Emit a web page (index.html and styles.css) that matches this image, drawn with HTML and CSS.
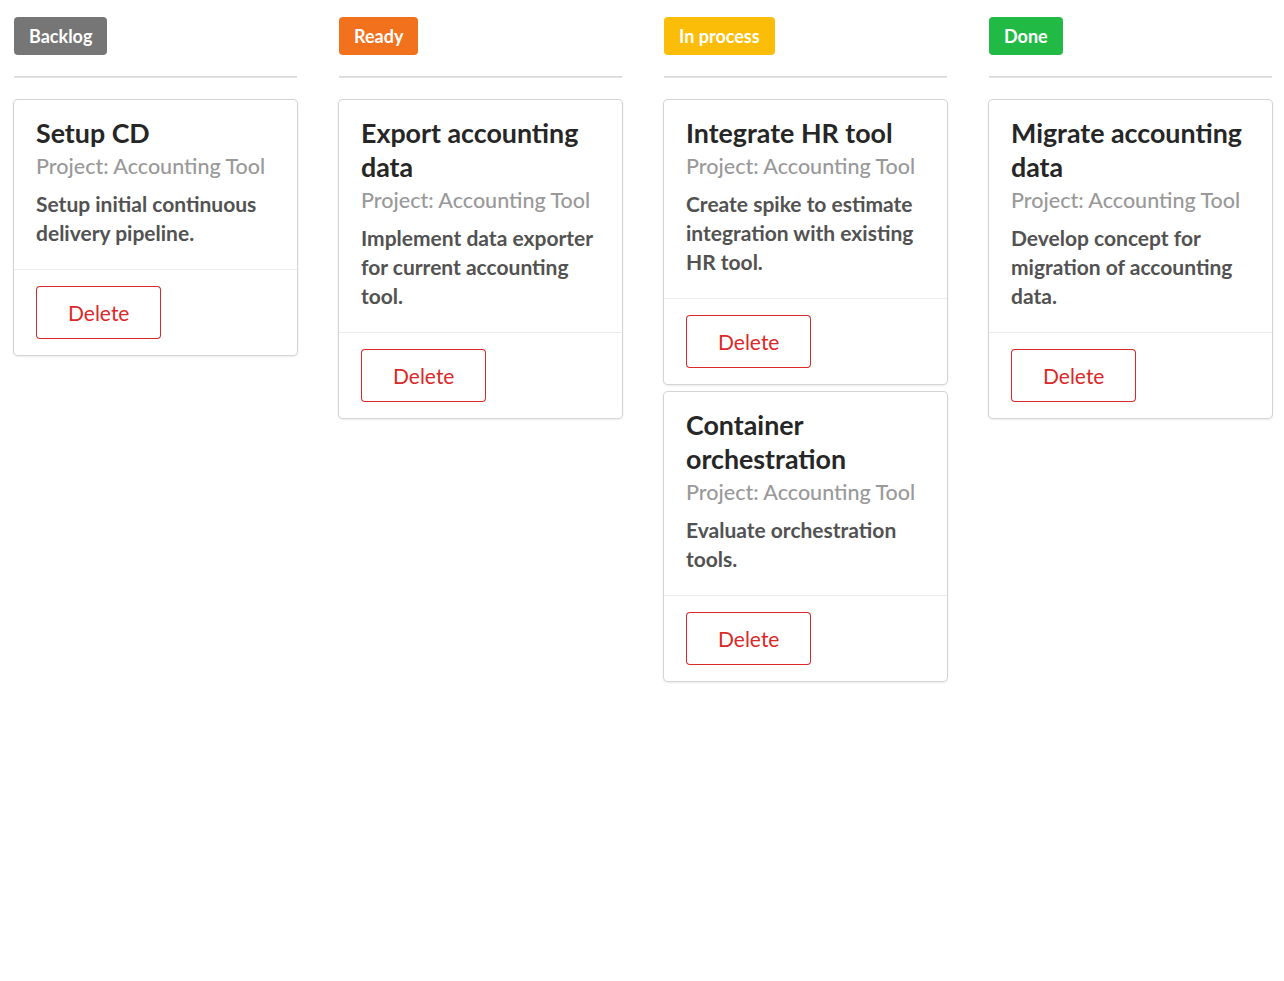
FILE: index.html
```html
<!DOCTYPE html>
<html lang="en">
<head>
<meta charset="utf-8">
<title>Board</title>
<link rel="stylesheet" href="styles.css">
</head>
<body>
<div class="board">
  <section class="column">
    <div class="column-head"><span class="label grey">Backlog</span></div>
    <div class="divider"></div>
    <div class="cards">
      <div class="card">
        <div class="content">
          <div class="header">Setup CD</div>
          <div class="meta">Project: Accounting Tool</div>
          <div class="description">Setup initial continuous delivery pipeline.</div>
        </div>
        <div class="extra"><button class="btn-delete">Delete</button></div>
      </div>
    </div>
  </section>
  <section class="column">
    <div class="column-head"><span class="label orange">Ready</span></div>
    <div class="divider"></div>
    <div class="cards">
      <div class="card">
        <div class="content">
          <div class="header">Export accounting data</div>
          <div class="meta">Project: Accounting Tool</div>
          <div class="description">Implement data exporter for current accounting tool.</div>
        </div>
        <div class="extra"><button class="btn-delete">Delete</button></div>
      </div>
    </div>
  </section>
  <section class="column">
    <div class="column-head"><span class="label yellow">In process</span></div>
    <div class="divider"></div>
    <div class="cards">
      <div class="card">
        <div class="content">
          <div class="header">Integrate HR tool</div>
          <div class="meta">Project: Accounting Tool</div>
          <div class="description">Create spike to estimate integration with existing HR tool.</div>
        </div>
        <div class="extra"><button class="btn-delete">Delete</button></div>
      </div>
      <div class="card">
        <div class="content">
          <div class="header">Container orchestration</div>
          <div class="meta">Project: Accounting Tool</div>
          <div class="description">Evaluate orchestration tools.</div>
        </div>
        <div class="extra"><button class="btn-delete">Delete</button></div>
      </div>
    </div>
  </section>
  <section class="column">
    <div class="column-head"><span class="label green">Done</span></div>
    <div class="divider"></div>
    <div class="cards">
      <div class="card">
        <div class="content">
          <div class="header">Migrate accounting data</div>
          <div class="meta">Project: Accounting Tool</div>
          <div class="description">Develop concept for migration of accounting data.</div>
        </div>
        <div class="extra"><button class="btn-delete">Delete</button></div>
      </div>
    </div>
  </section>
</div>
</body>
</html>
```

FILE: styles.css
```css
html, body {
  margin: 0;
  padding: 0;
  background: #ffffff;
  font-family: Lato, "Helvetica Neue", Arial, sans-serif;
}

body {
  min-height: 981px;
}

.board {
  display: flex;
  gap: 42px;
  padding: 17px 12px 40px 14px;
}

.column {
  width: 283px;
  flex: 0 0 283px;
}

.column-head {
  height: 38px;
}

.label {
  display: inline-block;
  font-weight: 700;
  font-size: 18px;
  line-height: 18px;
  padding: 10px 15px;
  border-radius: 4px;
  color: #ffffff;
}

.label.grey { background: #767676; }
.label.orange { background: #f2711c; }
.label.yellow { background: #fbbd08; }
.label.green { background: #21ba45; }

.divider {
  margin-top: 21px;
  height: 0;
  border-top: 1px solid #d9d9d9;
  border-bottom: 1px solid #e3e3e3;
}

.cards {
  margin-top: 22px;
  display: flex;
  flex-direction: column;
  gap: 8px;
}

.card {
  background: #ffffff;
  border-radius: 4px;
  box-shadow: 0 1px 3px 0 #d4d4d5, 0 0 0 1px #d4d4d5;
}

.content {
  padding: 16px 22px 22px;
}

.header {
  font-weight: 700;
  font-size: 26.8px;
  line-height: 34px;
  color: #262626;
}

.meta {
  margin-top: 2px;
  font-size: 21.5px;
  font-weight: 500;
  line-height: 28px;
  color: #999999;
}

.description {
  margin-top: 9px;
  font-size: 21px;
  line-height: 29px;
  font-weight: 700;
  color: #525252;
}

.extra {
  border-top: 1px solid #ececec;
  padding: 16px 22px 16px;
}

.btn-delete {
  display: inline-block;
  font-family: Lato, "Helvetica Neue", Arial, sans-serif;
  font-size: 21px;
  line-height: 21px;
  padding: 16px 32px;
  background: #ffffff;
  color: #db2828;
  border: none;
  border-radius: 4px;
  box-shadow: inset 0 0 0 1px #db2828;
  cursor: pointer;
}
```
